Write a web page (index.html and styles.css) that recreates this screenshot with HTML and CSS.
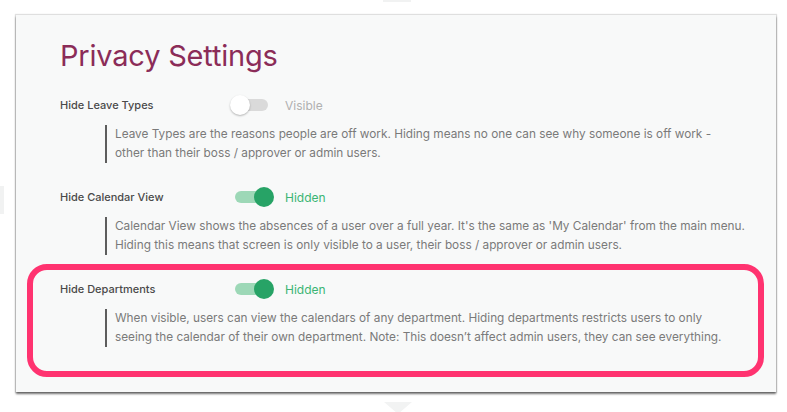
FILE: index.html
```html
<!DOCTYPE html>
<html lang="en">
<head>
<meta charset="utf-8">
<title>Privacy Settings</title>
<link rel="stylesheet" href="styles.css">
</head>
<body>
<div class="ghost ghost-top"></div>
<div class="ghost ghost-left"></div>
<div class="ghost ghost-bottom"></div>
<main class="card">
  <h1 class="title">Privacy Settings</h1>
  <section class="setting">
    <div class="setting-head">
      <span class="label">Hide Leave Types</span>
      <span class="switch"><span class="track"></span><span class="knob"></span></span>
      <span class="status">Visible</span>
    </div>
    <p class="desc">Leave Types are the reasons people are off work. Hiding means no one can see why someone is off work -<br>other than their boss / approver or admin users.</p>
  </section>
  <section class="setting">
    <div class="setting-head">
      <span class="label">Hide Calendar View</span>
      <span class="switch on"><span class="track"></span><span class="knob"></span></span>
      <span class="status on">Hidden</span>
    </div>
    <p class="desc">Calendar View shows the absences of a user over a full year. It's the same as 'My Calendar' from the main menu.<br>Hiding this means that screen is only visible to a user, their boss / approver or admin users.</p>
  </section>
  <section class="setting">
    <div class="setting-head">
      <span class="label">Hide Departments</span>
      <span class="switch on"><span class="track"></span><span class="knob"></span></span>
      <span class="status on">Hidden</span>
    </div>
    <p class="desc">When visible, users can view the calendars of any department. Hiding departments restricts users to only<br>seeing the calendar of their own department. Note: This doesn’t affect admin users, they can see everything.</p>
  </section>
  <div class="highlight"></div>
</main>
</body>
</html>
```
FILE: styles.css
```css
* { box-sizing: border-box; }
html, body { margin: 0; padding: 0; }
body {
  background: #ffffff;
  width: 787px;
  height: 412px;
  overflow: hidden;
  font-family: Inter, "Open Sans", "Liberation Sans", sans-serif;
  position: relative;
}
.ghost { position: absolute; background: #f1f2f2; }
.ghost-top { left: 383px; top: 0; width: 28px; height: 2px; }
.ghost-left { left: 0; top: 186px; width: 4px; height: 28px; }
.ghost-bottom {
  left: 384px; top: 402px; width: 28px; height: 12px;
  background: #f2f3f3;
  clip-path: polygon(0 0, 100% 0, 50% 100%);
}
.card {
  position: relative;
  margin: 15px 0 0 16px;
  width: 760px;
  height: 377px;
  background: #f8f9f9;
  box-shadow: 0 2px 2px rgba(0, 0, 0, 0.55), 0 0 1px 1px rgba(0, 0, 0, 0.12);
  padding: 24px 0 0 44px;
  display: flex;
  flex-direction: column;
}
.title {
  margin: 0;
  font-size: 29px;
  line-height: 34px;
  font-weight: 400;
  color: #8b2c58;
  letter-spacing: -0.2px;
}
.setting {
  display: flex;
  flex-direction: column;
  margin-top: 20px;
}
.setting + .setting { margin-top: 22px; }
.setting-head {
  display: flex;
  align-items: center;
  height: 24px;
}
.label {
  width: 170px;
  font-size: 11px;
  font-weight: 500;
  color: #4a4a4a;
}
.switch {
  position: relative;
  width: 46px;
  height: 22px;
  flex: none;
}
.track {
  position: absolute;
  left: 5px;
  top: 5px;
  width: 33px;
  height: 12px;
  border-radius: 6px;
  background: #dadada;
}
.knob {
  position: absolute;
  left: 0;
  top: 1px;
  width: 20px;
  height: 20px;
  border-radius: 50%;
  background: #ffffff;
  box-shadow: 0 1px 2px rgba(0, 0, 0, 0.28);
}
.switch.on .track { background: #9dd8b7; }
.switch.on .knob {
  left: 24px;
  background: #27a366;
  box-shadow: none;
}
.status {
  margin-left: 9px;
  font-size: 12px;
  color: #b0b0b0;
}
.status.on { color: #3bb574; }
.desc {
  margin: 8px 0 0 45px;
  width: 660px;
  padding-left: 8px;
  border-left: 2px solid #5d5d5d;
  font-size: 11.8px;
  line-height: 19px;
  color: #7a7a7a;
  white-space: nowrap;
}
.highlight {
  position: absolute;
  left: 11px;
  top: 249px;
  width: 737px;
  height: 113px;
  border: 6px solid #ff3370;
  border-radius: 20px;
  pointer-events: none;
}
```
